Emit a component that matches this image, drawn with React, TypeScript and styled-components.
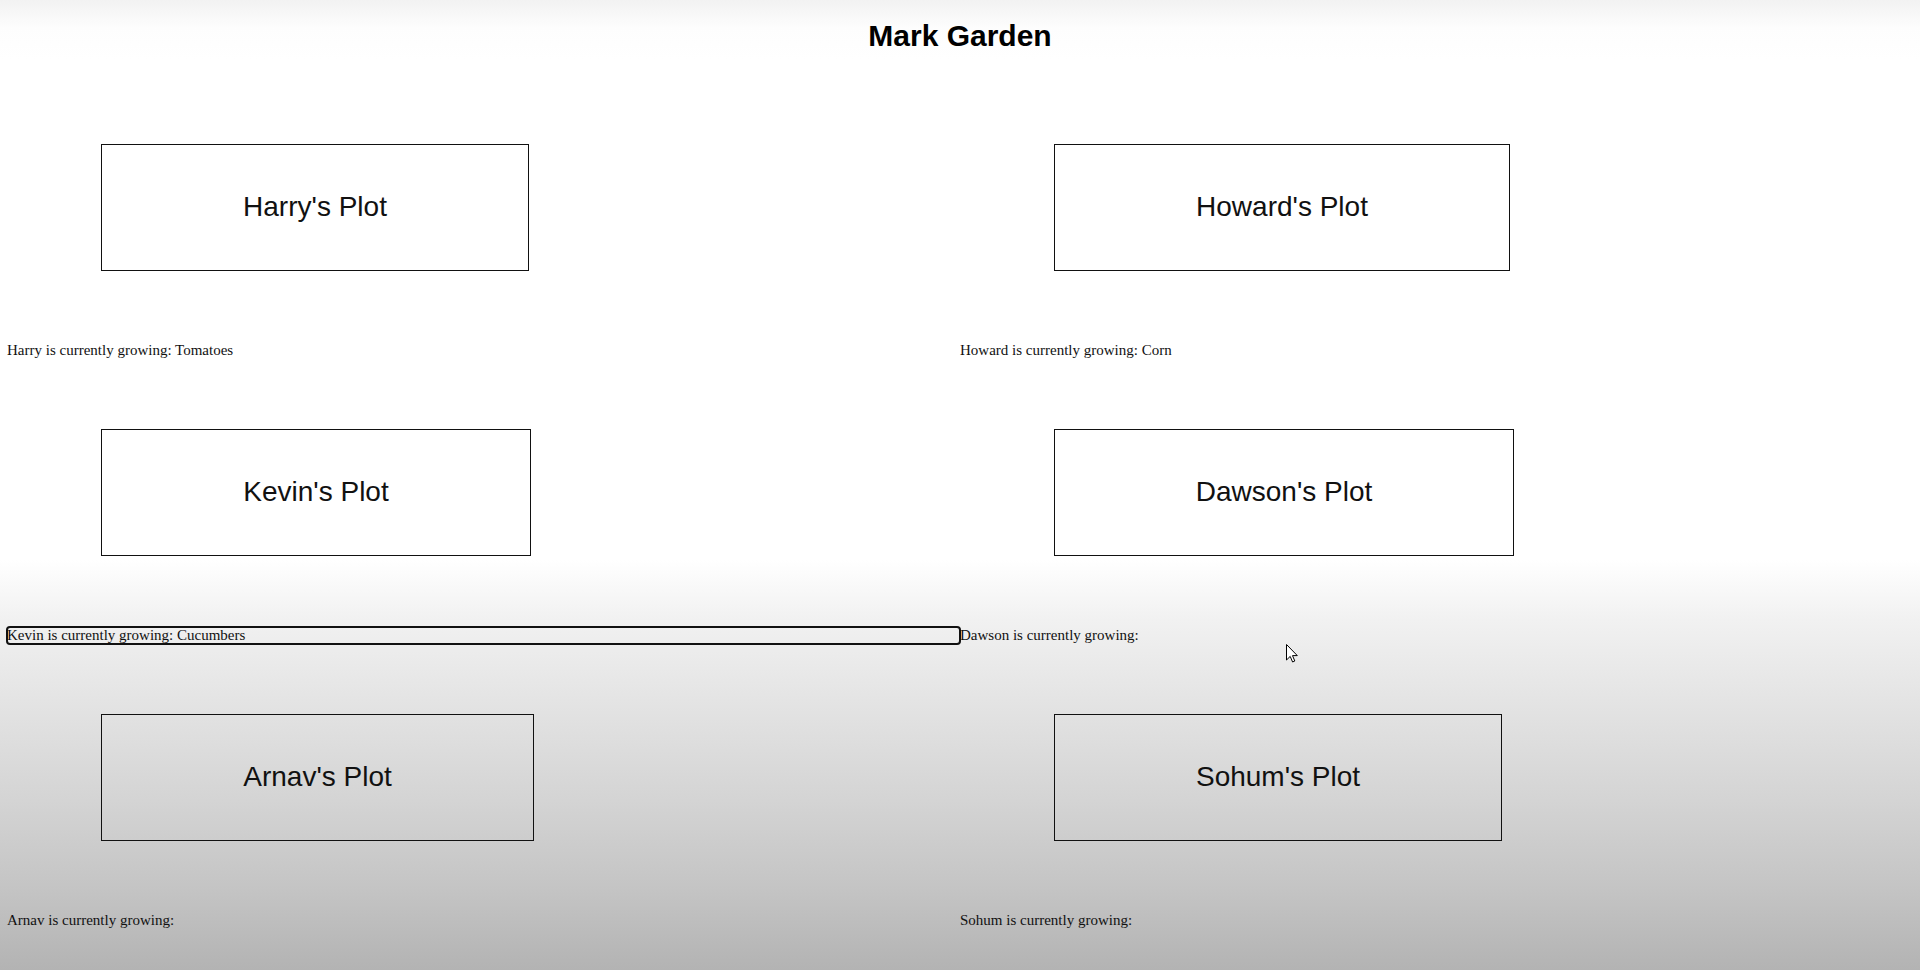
import React from "react";
import styled, { createGlobalStyle } from "styled-components";

const GlobalStyle = createGlobalStyle`
  html, body {
    margin: 0;
    padding: 0;
  }
  body {
    font-family: "Liberation Serif", "Times New Roman", serif;
    color: #000;
  }
`;

const Page = styled.div`
  position: relative;
  min-height: 970px;
  box-sizing: border-box;
  padding: 0 7px;
  overflow: hidden;
  background: linear-gradient(
    to bottom,
    #f2f2f2 0px,
    #fdfdfd 28px,
    #ffffff 60px,
    #ffffff 560px,
    #f1f1f1 620px,
    #e4e4e4 700px,
    #d4d4d4 800px,
    #c4c4c4 890px,
    #b3b3b3 970px
  );
`;

const Title = styled.h1`
  margin: 0;
  padding-top: 19px;
  font-family: "Liberation Sans", Arial, sans-serif;
  font-size: 30px;
  line-height: 34px;
  font-weight: 700;
  text-align: center;
  color: #000;
`;

const Garden = styled.div`
  display: grid;
  grid-template-columns: 1fr 1fr;
  row-gap: 70px;
  margin-top: 91px;
`;

const Cell = styled.section`
  display: flex;
  flex-direction: column;
  align-items: flex-start;
`;

const PlotBox = styled.div<{ $w: number }>`
  box-sizing: border-box;
  width: ${(p) => p.$w}px;
  height: 127px;
  margin-left: 94px;
  margin-bottom: 71px;
  padding-bottom: 2px;
  border: 1px solid #111;
  display: flex;
  align-items: center;
  justify-content: center;
  font-family: "Liberation Sans", Arial, sans-serif;
  font-size: 28px;
  color: #111;
`;

const Growing = styled.p<{ $focused?: boolean }>`
  margin: 0;
  align-self: stretch;
  font-size: 15px;
  line-height: 17px;
  height: 17px;
  color: #111;
  border-radius: 3px;
  outline: ${(p) => (p.$focused ? "2px solid #111" : "none")};
  outline-offset: -1px;
`;

const Cursor = styled.svg`
  position: absolute;
  left: 1286px;
  top: 644px;
  width: 12px;
  height: 19px;
  pointer-events: none;
`;

const plots = [
  { name: "Harry", w: 428, crop: "Tomatoes" },
  { name: "Howard", w: 456, crop: "Corn" },
  { name: "Kevin", w: 430, crop: "Cucumbers", focused: true },
  { name: "Dawson", w: 460, crop: "" },
  { name: "Arnav", w: 433, crop: "" },
  { name: "Sohum", w: 448, crop: "" },
];

export default function App() {
  return (
    <>
      <GlobalStyle />
      <Page>
        <Title>Mark Garden</Title>
        <Garden>
          {plots.map((p) => (
            <Cell key={p.name}>
              <PlotBox $w={p.w}>{p.name}'s Plot</PlotBox>
              <Growing $focused={p.focused}>
                {p.name} is currently growing: {p.crop}
              </Growing>
            </Cell>
          ))}
        </Garden>
        <Cursor viewBox="0 0 12 19">
          <path
            d="M0.5 0.5 L0.5 16 L4.2 12.4 L6.6 18 L8.8 17 L6.5 11.6 L11.3 11.6 Z"
            fill="#fff"
            stroke="#000"
            strokeWidth="1"
            strokeLinejoin="miter"
          />
        </Cursor>
      </Page>
    </>
  );
}
